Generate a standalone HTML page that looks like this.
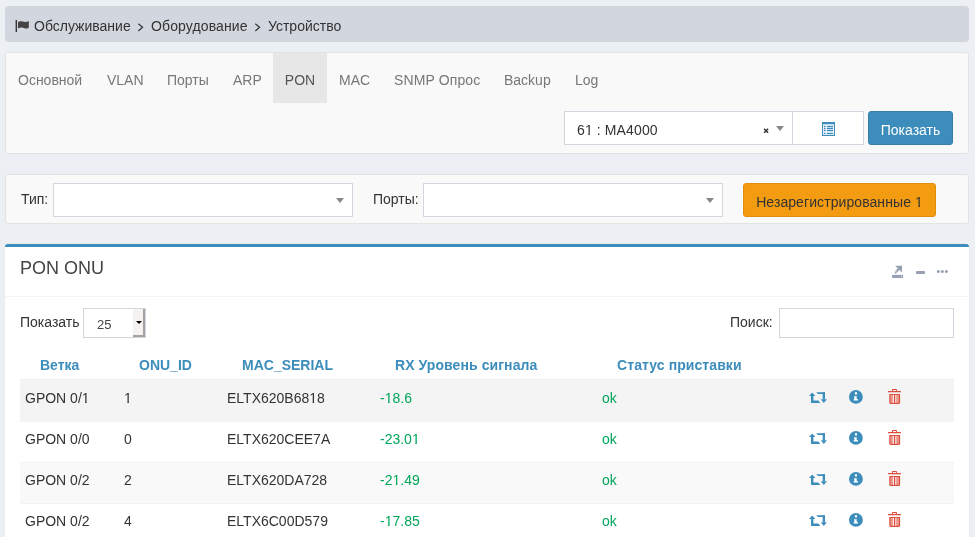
<!DOCTYPE html>
<html><head><meta charset="utf-8">
<style>
*{box-sizing:border-box;margin:0;padding:0}
html,body{width:975px;height:537px;overflow:hidden}
body{will-change:transform}
body{background:#ecf0f5;font-family:"Liberation Sans",sans-serif;font-size:14px;color:#333;position:relative}
.abs{position:absolute}
.bc{left:5px;top:6px;width:964px;height:36px;background:#d2d6de;border-radius:4px}
.bc span{position:absolute;top:12px;font-size:14px;color:#333;white-space:nowrap}
.panel1{left:5px;top:52px;width:964px;height:102px;background:#f9f9f9;border:1px solid #e3e3e3;border-radius:3px}
.tab{position:absolute;top:0;height:50px;line-height:54px;font-size:14px;color:#777;white-space:nowrap}
.tab.act{background:#e7e7e7;color:#555}
.panel2{left:5px;top:174px;width:964px;height:50px;background:#f9f9f9;border:1px solid #e3e3e3;border-radius:3px}
.box{left:5px;top:244px;width:964px;height:310px;background:#fff;border-top:3px solid #3c8dbc;border-radius:3px;box-shadow:0 0 1px rgba(0,0,0,0.12)}
.sel{position:absolute;background:#fff;border:1px solid #d2d6de}
.btn{position:absolute;color:#fff;text-align:center;border-radius:3px;font-size:14px;white-space:nowrap}
.th{position:absolute;top:357px;font-weight:bold;color:#3c8dbc;font-size:14px;white-space:nowrap}
.row{position:absolute;left:20px;width:934px;height:41px}
.row.odd{background:#f4f4f4}
.c{position:absolute;font-size:14px;white-space:nowrap}
.g{color:#00a65a}
.one{display:inline-block;line-height:16px;clip-path:polygon(0 0,100% 0,100% 11.95px,4.9px 11.95px,4.9px 100%,3.35px 100%,3.35px 11.95px,0 11.95px)}
</style></head><body>
<div class="abs bc">
  <svg class="abs" style="left:9px;top:12px" width="18" height="16" viewBox="0 0 18 16"><rect x="1.6" y="2" width="1.4" height="12" fill="#333"/><path d="M4 4.1 C5.5 3.2 7 3.2 8.5 3.6 S12.5 4.6 14.8 3 L14.8 9.7 C13 10.8 11.5 10.8 10 10 S6 9.2 4 10.5 Z" fill="#444"/></svg>
  <span style="left:29px">Обслуживание</span>
  <svg class="abs" style="left:132px;top:16px" width="8" height="10" viewBox="0 0 8 10"><path d="M1.3 1.8 L5.6 5.3 L1.3 9" fill="none" stroke="#333" stroke-width="1.2"/></svg>
  <span style="left:146px;letter-spacing:0.12px">Оборудование</span>
  <svg class="abs" style="left:249px;top:16px" width="8" height="10" viewBox="0 0 8 10"><path d="M1.3 1.8 L5.6 5.3 L1.3 9" fill="none" stroke="#333" stroke-width="1.2"/></svg>
  <span style="left:263px">Устройство</span>
</div>

<div class="abs panel1">
  <div class="tab" style="left:12px">Основной</div>
  <div class="tab" style="left:101px">VLAN</div>
  <div class="tab" style="left:161px">Порты</div>
  <div class="tab" style="left:227px">ARP</div>
  <div class="tab act" style="left:267px;width:54px;text-align:center">PON</div>
  <div class="tab" style="left:333px">MAC</div>
  <div class="tab" style="left:388px;letter-spacing:0.12px">SNMP Опрос</div>
  <div class="tab" style="left:498px">Backup</div>
  <div class="tab" style="left:569px">Log</div>
  <div class="sel" style="left:558px;top:58px;width:229px;height:34px">
    <span class="c" style="left:12px;top:10px;color:#333;letter-spacing:0.12px">6<span class="one">1</span> : MA4000</span>
    <svg class="abs" style="left:198px;top:14px" width="8" height="8" viewBox="0 0 8 8"><path d="M1.1 2.7 L5.1 6.7 M5.1 2.7 L1.1 6.7" stroke="#333" stroke-width="1.5"/></svg>
    <span style="position:absolute;left:211px;top:14px;width:0;height:0;border-left:4px solid transparent;border-right:4px solid transparent;border-top:5px solid #888"></span>
  </div>
  <div class="sel" style="left:786px;top:58px;width:72px;height:34px"></div>
  <svg class="abs" style="left:816px;top:69px" width="13" height="14" viewBox="0 0 13 14"><rect x="0" y="0" width="13" height="14" fill="#3c8dbc"/><rect x="1" y="2.2" width="11" height="10.8" fill="#e8f1f7"/><g fill="#3c8dbc"><rect x="2" y="3.9" width="1.6" height="1.2"/><rect x="5" y="3.9" width="6" height="1.2"/><rect x="2" y="5.9" width="1.6" height="1.2"/><rect x="5" y="5.9" width="6" height="1.2"/><rect x="2" y="7.9" width="1.6" height="1.2"/><rect x="5" y="7.9" width="6" height="1.2"/><rect x="2" y="10.9" width="1.6" height="1.2"/><rect x="5" y="10.9" width="6" height="1.2"/></g></svg>
  <div class="btn" style="left:862px;top:58px;width:85px;height:34px;background:#3c8dbc;border:1px solid #367fa9;line-height:36px">Показать</div>
</div>

<div class="abs panel2">
  <span class="c" style="left:15px;top:16px">Тип:</span>
  <div class="sel" style="left:47px;top:8px;width:300px;height:34px">
    <span style="position:absolute;left:282px;top:14px;width:0;height:0;border-left:4px solid transparent;border-right:4px solid transparent;border-top:5px solid #888"></span>
  </div>
  <span class="c" style="left:367px;top:16px">Порты:</span>
  <div class="sel" style="left:417px;top:8px;width:300px;height:34px">
    <span style="position:absolute;left:282px;top:14px;width:0;height:0;border-left:4px solid transparent;border-right:4px solid transparent;border-top:5px solid #888"></span>
  </div>
  <div class="btn" style="left:737px;top:8px;width:193px;height:34px;background:#f39c12;border:1px solid #e08e0b;color:#333;line-height:36px;letter-spacing:0.08px">Незарегистрированные <span class="one">1</span></div>
</div>

<div class="abs box">
  <span class="c" style="left:15px;top:11px;font-size:18px;color:#444">PON ONU</span>
  <div style="position:absolute;left:0;top:49px;width:964px;height:1px;background:#f4f4f4"></div>
</div>

<!-- box tools -->
<svg class="abs" style="left:890px;top:263px" width="16" height="17" viewBox="0 0 16 17">
  <path d="M5.2 2.7 L12 2.7 L12 9.4 Z" fill="#97a0b3"/>
  <path d="M9.8 5 L4.8 10" stroke="#97a0b3" stroke-width="2.3"/>
  <path d="M6.6 7.6 L3.6 10.6" stroke="#fff" stroke-width="0.7"/>
  <rect x="2.1" y="11.9" width="10.9" height="3.1" fill="#97a0b3"/>
  <rect x="10.9" y="12.9" width="1.1" height="1.1" fill="#dfe2e8"/>
</svg>
<div class="abs" style="left:916px;top:271px;width:9px;height:2.6px;background:#97a0b3;border-radius:1px"></div>
<svg class="abs" style="left:935px;top:268px" width="14" height="7" viewBox="0 0 14 7">
  <circle cx="3.3" cy="3.5" r="1.5" fill="#97a0b3"/><circle cx="7.3" cy="3.5" r="1.5" fill="#97a0b3"/><circle cx="11.4" cy="3.5" r="1.5" fill="#97a0b3"/>
</svg>

<span class="c" style="left:20px;top:314px">Показать</span>
<div class="sel" style="left:83px;top:308px;width:63px;height:30px">
  <span class="c" style="left:13px;top:8px;font-size:13px;color:#444">25</span>
  <div style="position:absolute;left:49px;top:0;width:12px;height:28px;background:#f4f3f1;border-right:2px solid #a3a3a3;border-bottom:2px solid #a3a3a3"></div>
  <span style="position:absolute;left:52px;top:12px;width:0;height:0;border-left:3.2px solid transparent;border-right:3.2px solid transparent;border-top:3.6px solid #000"></span>
</div>
<span class="c" style="left:730px;top:314px">Поиск:</span>
<div class="sel" style="left:779px;top:308px;width:175px;height:30px"></div>

<span class="th" style="left:40px">Ветка</span>
<span class="th" style="left:139px">ONU_ID</span>
<span class="th" style="left:242px">MAC_SERIAL</span>
<span class="th" style="left:395px;letter-spacing:0.08px">RX Уровень сигнала</span>
<span class="th" style="left:617px;letter-spacing:0.08px">Статус приставки</span>

<div class="row" style="top:379px;height:42px;background:#f4f4f4;border-top:1px solid #efefef"></div>
<div class="row" style="top:421px;height:41px;border-top:1px solid #f2f2f2"></div>
<div class="row" style="top:462px;height:42px;background:#f9f9f9;border-top:1px solid #f2f2f2"></div>
<div class="row" style="top:503px;height:41px;border-top:1px solid #f2f2f2"></div>

<div class="c" style="left:25px;top:390px">GPON 0/<span class="one">1</span></div>
<div class="c" style="left:124px;top:390px"><span class="one">1</span></div>
<div class="c" style="left:227px;top:390px">ELTX620B68<span class="one">1</span>8</div>
<div class="c g" style="left:380px;top:390px">-<span class="one">1</span>8.6</div>
<div class="c g" style="left:602px;top:390px">ok</div>

<div class="c" style="left:25px;top:431px">GPON 0/0</div>
<div class="c" style="left:124px;top:431px">0</div>
<div class="c" style="left:227px;top:431px">ELTX620CEE7A</div>
<div class="c g" style="left:380px;top:431px">-23.0<span class="one">1</span></div>
<div class="c g" style="left:602px;top:431px">ok</div>

<div class="c" style="left:25px;top:472px">GPON 0/2</div>
<div class="c" style="left:124px;top:472px">2</div>
<div class="c" style="left:227px;top:472px">ELTX620DA728</div>
<div class="c g" style="left:380px;top:472px">-2<span class="one">1</span>.49</div>
<div class="c g" style="left:602px;top:472px">ok</div>

<div class="c" style="left:25px;top:513px">GPON 0/2</div>
<div class="c" style="left:124px;top:513px">4</div>
<div class="c" style="left:227px;top:513px">ELTX6C00D579</div>
<div class="c g" style="left:380px;top:513px">-<span class="one">1</span>7.85</div>
<div class="c g" style="left:602px;top:513px">ok</div>

<svg class="abs" style="left:808px;top:391px" width="20" height="13" viewBox="0 0 20 13"><g fill="#3c8dbc"><path d="M1 5 L4.2 1.5 L7.4 5 Z"/><rect x="3" y="4.8" width="2.4" height="7.2"/><path d="M3 9.4 L10.4 9.4 L12.2 12 L3 12 Z"/><path d="M8.2 1.2 L17 1.2 L17 3.1 L10 3.1 Z"/><rect x="14.7" y="1.2" width="2.3" height="7.2"/><path d="M12.8 8.2 L18.9 8.2 L15.85 12 Z"/></g></svg>
<svg class="abs" style="left:848px;top:389px" width="16" height="16" viewBox="0 0 16 16"><circle cx="7.9" cy="7.9" r="6.9" fill="#3c8dbc"/><g fill="#fff"><rect x="6.9" y="3.2" width="2.1" height="2.3"/><path d="M6.1 7.2 L8.7 7.2 L8.7 10.1 L9.9 10.1 L9.9 11.6 L5.7 11.6 L5.7 10.1 L6.4 10.1 L6.4 8.5 L6.1 8.5 Z"/></g></svg>
<svg class="abs" style="left:887px;top:388px" width="15" height="17" viewBox="0 0 15 17"><g fill="#dd4b39"><rect x="0.9" y="2.9" width="13.1" height="1.4" rx="0.5"/><path d="M5 3 L5 1.6 Q5 1 5.6 1 L9.3 1 Q9.9 1 9.9 1.6 L9.9 3 L8.9 3 L8.9 2 L6 2 L6 3 Z"/></g><path d="M2.3 6 L13.1 6 L13.1 14.6 Q13.1 15.9 11.8 15.9 L3.6 15.9 Q2.3 15.9 2.3 14.6 Z" fill="#dd4b39"/><rect x="3.4" y="6.9" width="8.6" height="7.9" fill="#eb9489"/><rect x="7" y="6.9" width="1.2" height="8" fill="#dd4b39"/><rect x="5.9" y="6.9" width="0.9" height="8" fill="#fff"/><rect x="8.4" y="6.9" width="0.8" height="8" fill="#fff"/></svg>
<svg class="abs" style="left:808px;top:432px" width="20" height="13" viewBox="0 0 20 13"><g fill="#3c8dbc"><path d="M1 5 L4.2 1.5 L7.4 5 Z"/><rect x="3" y="4.8" width="2.4" height="7.2"/><path d="M3 9.4 L10.4 9.4 L12.2 12 L3 12 Z"/><path d="M8.2 1.2 L17 1.2 L17 3.1 L10 3.1 Z"/><rect x="14.7" y="1.2" width="2.3" height="7.2"/><path d="M12.8 8.2 L18.9 8.2 L15.85 12 Z"/></g></svg>
<svg class="abs" style="left:848px;top:430px" width="16" height="16" viewBox="0 0 16 16"><circle cx="7.9" cy="7.9" r="6.9" fill="#3c8dbc"/><g fill="#fff"><rect x="6.9" y="3.2" width="2.1" height="2.3"/><path d="M6.1 7.2 L8.7 7.2 L8.7 10.1 L9.9 10.1 L9.9 11.6 L5.7 11.6 L5.7 10.1 L6.4 10.1 L6.4 8.5 L6.1 8.5 Z"/></g></svg>
<svg class="abs" style="left:887px;top:429px" width="15" height="17" viewBox="0 0 15 17"><g fill="#dd4b39"><rect x="0.9" y="2.9" width="13.1" height="1.4" rx="0.5"/><path d="M5 3 L5 1.6 Q5 1 5.6 1 L9.3 1 Q9.9 1 9.9 1.6 L9.9 3 L8.9 3 L8.9 2 L6 2 L6 3 Z"/></g><path d="M2.3 6 L13.1 6 L13.1 14.6 Q13.1 15.9 11.8 15.9 L3.6 15.9 Q2.3 15.9 2.3 14.6 Z" fill="#dd4b39"/><rect x="3.4" y="6.9" width="8.6" height="7.9" fill="#eb9489"/><rect x="7" y="6.9" width="1.2" height="8" fill="#dd4b39"/><rect x="5.9" y="6.9" width="0.9" height="8" fill="#fff"/><rect x="8.4" y="6.9" width="0.8" height="8" fill="#fff"/></svg>
<svg class="abs" style="left:808px;top:473px" width="20" height="13" viewBox="0 0 20 13"><g fill="#3c8dbc"><path d="M1 5 L4.2 1.5 L7.4 5 Z"/><rect x="3" y="4.8" width="2.4" height="7.2"/><path d="M3 9.4 L10.4 9.4 L12.2 12 L3 12 Z"/><path d="M8.2 1.2 L17 1.2 L17 3.1 L10 3.1 Z"/><rect x="14.7" y="1.2" width="2.3" height="7.2"/><path d="M12.8 8.2 L18.9 8.2 L15.85 12 Z"/></g></svg>
<svg class="abs" style="left:848px;top:471px" width="16" height="16" viewBox="0 0 16 16"><circle cx="7.9" cy="7.9" r="6.9" fill="#3c8dbc"/><g fill="#fff"><rect x="6.9" y="3.2" width="2.1" height="2.3"/><path d="M6.1 7.2 L8.7 7.2 L8.7 10.1 L9.9 10.1 L9.9 11.6 L5.7 11.6 L5.7 10.1 L6.4 10.1 L6.4 8.5 L6.1 8.5 Z"/></g></svg>
<svg class="abs" style="left:887px;top:470px" width="15" height="17" viewBox="0 0 15 17"><g fill="#dd4b39"><rect x="0.9" y="2.9" width="13.1" height="1.4" rx="0.5"/><path d="M5 3 L5 1.6 Q5 1 5.6 1 L9.3 1 Q9.9 1 9.9 1.6 L9.9 3 L8.9 3 L8.9 2 L6 2 L6 3 Z"/></g><path d="M2.3 6 L13.1 6 L13.1 14.6 Q13.1 15.9 11.8 15.9 L3.6 15.9 Q2.3 15.9 2.3 14.6 Z" fill="#dd4b39"/><rect x="3.4" y="6.9" width="8.6" height="7.9" fill="#eb9489"/><rect x="7" y="6.9" width="1.2" height="8" fill="#dd4b39"/><rect x="5.9" y="6.9" width="0.9" height="8" fill="#fff"/><rect x="8.4" y="6.9" width="0.8" height="8" fill="#fff"/></svg>
<svg class="abs" style="left:808px;top:514px" width="20" height="13" viewBox="0 0 20 13"><g fill="#3c8dbc"><path d="M1 5 L4.2 1.5 L7.4 5 Z"/><rect x="3" y="4.8" width="2.4" height="7.2"/><path d="M3 9.4 L10.4 9.4 L12.2 12 L3 12 Z"/><path d="M8.2 1.2 L17 1.2 L17 3.1 L10 3.1 Z"/><rect x="14.7" y="1.2" width="2.3" height="7.2"/><path d="M12.8 8.2 L18.9 8.2 L15.85 12 Z"/></g></svg>
<svg class="abs" style="left:848px;top:512px" width="16" height="16" viewBox="0 0 16 16"><circle cx="7.9" cy="7.9" r="6.9" fill="#3c8dbc"/><g fill="#fff"><rect x="6.9" y="3.2" width="2.1" height="2.3"/><path d="M6.1 7.2 L8.7 7.2 L8.7 10.1 L9.9 10.1 L9.9 11.6 L5.7 11.6 L5.7 10.1 L6.4 10.1 L6.4 8.5 L6.1 8.5 Z"/></g></svg>
<svg class="abs" style="left:887px;top:511px" width="15" height="17" viewBox="0 0 15 17"><g fill="#dd4b39"><rect x="0.9" y="2.9" width="13.1" height="1.4" rx="0.5"/><path d="M5 3 L5 1.6 Q5 1 5.6 1 L9.3 1 Q9.9 1 9.9 1.6 L9.9 3 L8.9 3 L8.9 2 L6 2 L6 3 Z"/></g><path d="M2.3 6 L13.1 6 L13.1 14.6 Q13.1 15.9 11.8 15.9 L3.6 15.9 Q2.3 15.9 2.3 14.6 Z" fill="#dd4b39"/><rect x="3.4" y="6.9" width="8.6" height="7.9" fill="#eb9489"/><rect x="7" y="6.9" width="1.2" height="8" fill="#dd4b39"/><rect x="5.9" y="6.9" width="0.9" height="8" fill="#fff"/><rect x="8.4" y="6.9" width="0.8" height="8" fill="#fff"/></svg>
</body></html>
